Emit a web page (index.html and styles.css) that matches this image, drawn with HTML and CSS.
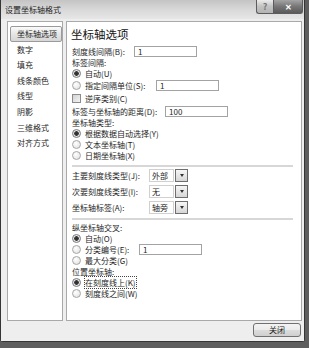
FILE: index.html
```html
<!DOCTYPE html>
<html lang="zh-CN">
<head>
    <meta charset="UTF-8">
    <title>设置坐标轴格式</title>
    <link rel="stylesheet" href="styles.css">
</head>
<body>
    <div class="window">
        <div class="titlebar">
            <span class="title">设置坐标轴格式</span>
            <div class="caption">
                <span class="cap help">?</span>
                <span class="cap close">✕</span>
            </div>
        </div>

        <div class="client">
            <div class="panes">
                <ul class="nav">
                    <li class="selected">坐标轴选项</li>
                    <li>数字</li>
                    <li>填充</li>
                    <li>线条颜色</li>
                    <li>线型</li>
                    <li>阴影</li>
                    <li>三维格式</li>
                    <li>对齐方式</li>
                </ul>

                <div class="page">
                    <div class="heading">坐标轴选项</div>

                    <div class="row field">
                        <span class="label w-interval">刻度线间隔(B):</span>
                        <span class="text-box">1</span>
                    </div>
                    <div class="row">标签间隔:</div>
                    <div class="row">
                        <span class="radio checked"></span>自动(U)
                    </div>
                    <div class="row field">
                        <span class="radio"></span>
                        <span class="label w-unit">指定间隔单位(S):</span>
                        <span class="text-box">1</span>
                    </div>
                    <div class="row check">
                        <span class="checkbox"></span>逆序类别(C)
                    </div>
                    <div class="row field">
                        <span class="label w-distance">标签与坐标轴的距离(D):</span>
                        <span class="text-box">100</span>
                    </div>
                    <div class="row">坐标轴类型:</div>
                    <div class="row">
                        <span class="radio checked"></span>根据数据自动选择(Y)
                    </div>
                    <div class="row">
                        <span class="radio"></span>文本坐标轴(T)
                    </div>
                    <div class="row">
                        <span class="radio"></span>日期坐标轴(X)
                    </div>

                    <div class="divider"></div>

                    <div class="row combo">
                        <span class="label w-combo">主要刻度线类型(J):</span>
                        <span class="combo-field">外部</span>
                        <span class="drop"></span>
                    </div>
                    <div class="row combo">
                        <span class="label w-combo">次要刻度线类型(I):</span>
                        <span class="combo-field">无</span>
                        <span class="drop"></span>
                    </div>
                    <div class="row combo last">
                        <span class="label w-combo">坐标轴标签(A):</span>
                        <span class="combo-field">轴旁</span>
                        <span class="drop"></span>
                    </div>

                    <div class="divider"></div>

                    <div class="row">纵坐标轴交叉:</div>
                    <div class="row short">
                        <span class="radio checked"></span>自动(O)
                    </div>
                    <div class="row field">
                        <span class="radio"></span>
                        <span class="label w-cross">分类编号(E):</span>
                        <span class="text-box">1</span>
                    </div>
                    <div class="row">
                        <span class="radio"></span>最大分类(G)
                    </div>
                    <div class="row">位置坐标轴:</div>
                    <div class="row">
                        <span class="radio checked"></span><span class="focus">在刻度线上(K)</span>
                    </div>
                    <div class="row">
                        <span class="radio"></span>刻度线之间(W)
                    </div>
                </div>
            </div>

            <div class="footer">
                <button class="btn">关闭</button>
            </div>
        </div>
    </div>
</body>
</html>
```

FILE: styles.css
```css
* {
    box-sizing: border-box;
}

body {
    margin: 0;
    width: 309px;
    height: 348px;
    overflow: hidden;
    background: #5e5e5e;
    font-family: "Noto Sans CJK SC", "Noto Sans", sans-serif;
    font-size: 8px;
    color: #1e1e1e;
}

.window {
    width: 305px;
    height: 342px;
    background: #e4e4e4;
    border: 1px solid #353535;
    border-top: none;
    border-radius: 0 0 3px 3px;
    display: flex;
    flex-direction: column;
}

/* title bar */
.titlebar {
    height: 19px;
    display: flex;
    align-items: flex-start;
    justify-content: space-between;
    padding-left: 4px;
    background: linear-gradient(#c4c4c4, #dadada 55%, #e6e6e6);
}

.title {
    line-height: 19px;
    color: #222;
}

.caption {
    display: flex;
    margin-right: 1px;
}

.cap {
    height: 14px;
    display: flex;
    align-items: center;
    justify-content: center;
    border: 1px solid #5c5c5c;
    border-top: none;
}

.help {
    width: 17px;
    border-right: none;
    border-radius: 0 0 0 3px;
    background: linear-gradient(#ececec, #c2c2c2 50%, #b4b4b4);
    color: #777;
    font-size: 9px;
    font-weight: bold;
}

.close {
    width: 30px;
    border-radius: 0 0 3px 0;
    background: linear-gradient(#a4a4a4, #767676 50%, #5a5a5a);
    color: #fff;
    font-size: 8px;
    font-weight: bold;
}

/* client area */
.client {
    flex: 1;
    padding: 2px 2px 0 6px;
    display: flex;
    flex-direction: column;
    background: #eeeeee;
}

.panes {
    height: 300px;
    display: flex;
    gap: 3px;
}

.nav {
    width: 56px;
    margin: 0;
    padding: 4px 0 0 2px;
    list-style: none;
    background: #fff;
    border: 1px solid #a9a9a9;
}

.nav li {
    width: 52px;
    height: 15.6px;
    line-height: 15.6px;
    padding-left: 7px;
    white-space: nowrap;
}

.nav li.selected {
    padding-left: 6px;
    line-height: 13.6px;
    border: 1px solid #9a9a9a;
    border-radius: 2px;
    background: linear-gradient(#fbfbfb, #e6e6e6 50%, #d6d6d6);
}

.page {
    flex: 1;
    padding: 4px 4px 0 5px;
    background: #fff;
    border: 1px solid #a9a9a9;
}

.heading {
    height: 19px;
    margin-left: -1px;
    font-size: 11.5px;
    line-height: 16px;
    color: #111;
}

.row {
    height: 11px;
    display: flex;
    align-items: center;
    white-space: nowrap;
}

.row.short {
    height: 10px;
}

.row.field {
    height: 12px;
}

.row.check {
    height: 14px;
}

.row.combo {
    height: 13px;
    margin-bottom: 3px;
}

.row.combo.last {
    margin-bottom: 0;
}

.label {
    flex: none;
}

.w-interval { width: 62px; }
.w-unit { width: 71px; }
.w-distance { width: 93px; }
.w-cross { width: 54px; }
.w-combo { width: 77px; }

.text-box {
    width: 63px;
    height: 11px;
    padding-left: 3px;
    line-height: 9px;
    background: #fff;
    border: 1px solid #a3a3a3;
}

.radio {
    flex: none;
    width: 9px;
    height: 9px;
    margin-right: 4px;
    border-radius: 50%;
    border: 1px solid #a6a6a6;
    background: radial-gradient(circle at 40% 35%, #fff, #dedede);
}

.radio.checked {
    border-color: #7a7a7a;
    background: radial-gradient(circle, #2e2e2e 0, #3a3a3a 2px, #e6e6e6 2.6px);
}

.checkbox {
    flex: none;
    width: 9px;
    height: 9px;
    margin-right: 4px;
    border: 1px solid #8c8c8c;
    background: linear-gradient(135deg, #d2d2d2, #f4f4f4);
}

.focus {
    outline: 1px dotted #444;
    outline-offset: 0;
}

.divider {
    height: 2px;
    margin: 4px 4px 2px 0;
    background: #d7d7d7;
}

.combo-field {
    width: 25px;
    height: 13px;
    padding-left: 2px;
    line-height: 11px;
    border: 1px solid #d0d0d0;
}

.drop {
    width: 13px;
    height: 13px;
    margin-left: 1px;
    display: flex;
    align-items: center;
    justify-content: center;
    border: 1px solid #6e6e6e;
    background: linear-gradient(#f6f6f6, #d6d6d6);
}

.drop::after {
    content: "";
    border-left: 2.5px solid transparent;
    border-right: 2.5px solid transparent;
    border-top: 3px solid #333;
}

/* footer */
.footer {
    display: flex;
    justify-content: flex-end;
    padding: 2px 1px 0 0;
}

.btn {
    width: 48px;
    height: 14px;
    padding: 0;
    font-family: inherit;
    font-size: 8px;
    line-height: 12px;
    color: #222;
    border: 1px solid #707070;
    border-radius: 3px;
    background: linear-gradient(#f3f3f3, #ebebeb 48%, #dcdcdc 52%, #cfcfcf);
}
```
